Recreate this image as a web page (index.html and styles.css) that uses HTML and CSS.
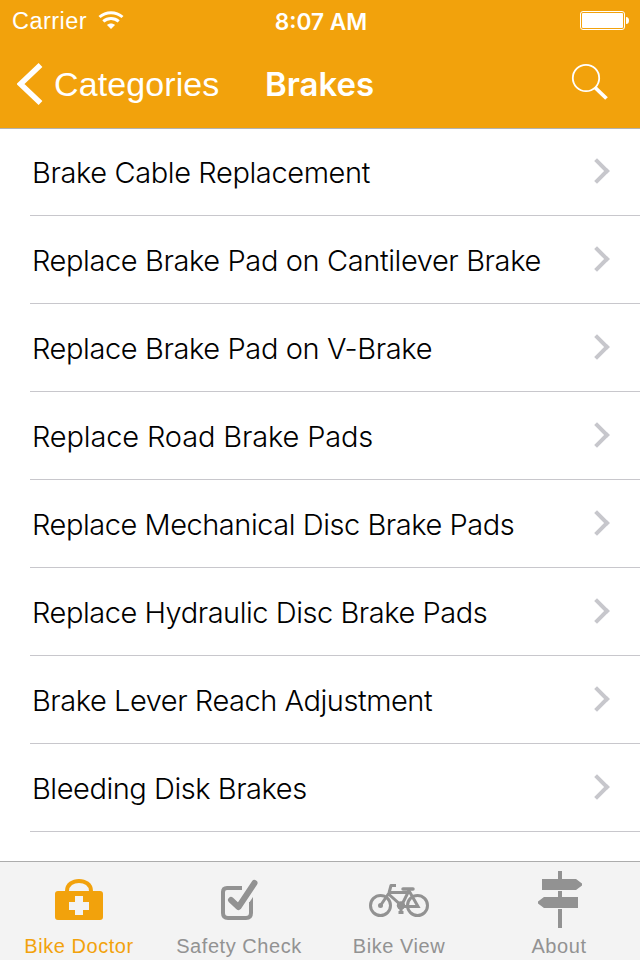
FILE: index.html
```html
<!DOCTYPE html>
<html lang="en">

<head>
    <meta charset="UTF-8">
    <meta name="viewport" content="width=device-width, initial-scale=1.0">
    <title>Brakes</title>
    <link rel="stylesheet" href="styles.css">
</head>

<body>
    <header>
        <div class="status-bar">
            <div class="carrier">
                <span>Carrier</span>
                <svg width="26" height="20" viewBox="0 0 26 20" fill="none" stroke="#fff" stroke-width="3">
                    <path d="M1.500 7C8 1.200 18 1.200 24.500 7"/>
                    <path d="M5.300 11.300c4.500-3.900 10.900-3.900 15.400 0"/>
                    <path d="M9 14.900c2.300-2 5.700-2 8 0L13 19z" fill="#fff" stroke="none"/>
                </svg>
            </div>
            <span class="time">8:07 AM</span>
            <svg class="battery" width="50" height="20" viewBox="0 0 50 20">
                <rect x=".5" y=".5" width="44" height="18" rx="2.500" fill="none" stroke="#fff"/>
                <rect x="2" y="2" width="41" height="15" rx="1" fill="#fff"/>
                <path d="M46 6q3 0 3 3.500t-3 3.500z" fill="#fff"/>
            </svg>
        </div>
        <nav class="nav-bar">
            <a class="back">
                <svg width="26" height="42" viewBox="0 0 26 42">
                    <path d="M23.500 2L3.500 21l20 19" fill="none" stroke="#fff" stroke-width="5.500"/>
                </svg>
                <span>Categories</span>
            </a>
            <h1>Brakes</h1>
            <svg class="search" width="38" height="38" viewBox="0 0 38 38" fill="none" stroke="#fff">
                <circle cx="15" cy="15" r="13.200" stroke-width="1.800"/>
                <path d="M24 24.500l11.500 11" stroke-width="3.800"/>
            </svg>
        </nav>
    </header>

    <ul class="list">
        <li><span>Brake Cable Replacement</span></li>
        <li><span>Replace Brake Pad on Cantilever Brake</span></li>
        <li><span>Replace Brake Pad on V-Brake</span></li>
        <li><span class="loose">Replace Road Brake Pads</span></li>
        <li><span class="tight">Replace Mechanical Disc Brake Pads</span></li>
        <li><span class="tight">Replace Hydraulic Disc Brake Pads</span></li>
        <li><span class="tight">Brake Lever Reach Adjustment</span></li>
        <li><span class="tight">Bleeding Disk Brakes</span></li>
    </ul>

    <footer class="tab-bar">
        <a class="tab active">
            <svg width="64" height="66" viewBox="0 0 64 66">
                <path d="M20 31v-2c0-13.500 24-13.500 24 0v2" fill="none" stroke="currentColor" stroke-width="4"/>
                <path fill-rule="evenodd" fill="currentColor" d="M11 29h42q3 0 3 3v23q0 3-3 3H11q-3 0-3-3V32q0-3 3-3zM28 34v6h-6v8h6v5h8v-5h6v-8h-6v-6z"/>
            </svg>
            <span>Bike Doctor</span>
        </a>
        <a class="tab">
            <svg width="64" height="66" viewBox="0 0 64 66" fill="none" stroke="currentColor">
                <path d="M35 26H20q-4 0-4 4v21q0 5 5 5h18q5 0 5-5V40" stroke-width="4"/>
                <path d="M46 35v7h-4v-1z" fill="currentColor" stroke="none"/>
                <path d="M24 38l7.500 7 16-24" stroke-width="6" stroke-linecap="round" stroke-linejoin="round"/>
            </svg>
            <span>Safety Check</span>
        </a>
        <a class="tab">
            <svg width="64" height="66" viewBox="0 0 64 66" fill="none" stroke="currentColor" stroke-width="3">
                <circle cx="13.500" cy="43.500" r="10"/>
                <circle cx="50.500" cy="43.500" r="10"/>
                <circle cx="13.500" cy="43.500" r="2.500" fill="currentColor" stroke="none"/>
                <circle cx="34" cy="43.500" r="4.200" fill="currentColor" stroke="none"/>
                <path d="M13.500 43.500L22 31l2-7.500h5" stroke-linejoin="round"/>
                <path d="M22 30.500h19L34.500 43.500 21.500 32M34 44.500h17L41 27"/>
                <path d="M36 27h10" stroke-width="3.500" stroke-linecap="round"/>
                <path d="M34 44v7M31.500 50.500h5"/>
            </svg>
            <span>Bike View</span>
        </a>
        <a class="tab">
            <svg width="64" height="66" viewBox="0 0 64 66" fill="currentColor">
                <path d="M31 9h4v8h14l6 4.500v2L49 28H15V17h16zM31 29h4v6h16v11H17l-6-4.500v-2L17 35h14zM31 47h4v19h-4z"/>
            </svg>
            <span>About</span>
        </a>
    </footer>
</body>

</html>
```

FILE: styles.css
```css
* {
    box-sizing: border-box;
}

body {
    margin: 0;
    height: 960px;
    display: flex;
    flex-direction: column;
    overflow: hidden;
    background: #fff;
    color: #000;
    font-family: "Liberation Sans", Arial, sans-serif;
}

svg {
    display: block;
    flex: none;
}

header {
    height: 129px;
    background: #f2a20c;
    color: #fff;
    border-bottom: 1px solid #b2b2b2;
}

.status-bar {
    height: 40px;
    display: grid;
    grid-template-columns: 1fr auto 1fr;
    align-items: center;
    padding: 2px 10px 0 12px;
}

.carrier {
    display: flex;
    align-items: center;
    gap: 11px;
    font-size: 23.5px;
    letter-spacing: 0.45px;
}

.carrier svg {
    margin-top: -2px;
}

.time {
    font-family: Inter, sans-serif;
    font-size: 22.7px;
    font-weight: 600;
}

.battery {
    justify-self: end;
}

.nav-bar {
    height: 88px;
    display: grid;
    grid-template-columns: 248px 1fr auto;
    align-items: center;
    padding: 0 31px 0 17px;
}

.back {
    display: flex;
    align-items: center;
    gap: 11px;
    font-size: 34px;
    letter-spacing: 0.1px;
}

h1 {
    margin: 0;
    font-family: Inter, sans-serif;
    font-size: 33px;
    font-weight: 600;
}

.search {
    margin-top: -4px;
}

.list {
    flex: 1;
    margin: 0;
    padding: 0 0 0 30px;
    list-style: none;
}

.list li {
    height: 88px;
    display: flex;
    align-items: center;
    justify-content: space-between;
    padding: 0 34px 0 2px;
    border-bottom: 1px solid #c8c7cc;
    font-family: Inter, sans-serif;
    font-size: 29px;
    font-weight: 300;
    letter-spacing: -0.39px;
    white-space: nowrap;
}

.list li:first-child {
    height: 87px;
}

.list span {
    padding-top: 1px;
}

.list .loose {
    letter-spacing: -0.15px;
}

.list .tight {
    letter-spacing: -0.46px;
}

.list li::after {
    content: "";
    box-sizing: border-box;
    width: 18px;
    height: 18px;
    margin-bottom: 2px;
    border: solid #c7c7cc;
    border-width: 4px 4px 0 0;
    transform: rotate(45deg);
}

.tab-bar {
    height: 99px;
    display: grid;
    grid-template-columns: repeat(4, 160px);
    background: #f3f3f3;
    border-top: 1px solid #acacac;
}

.tab {
    display: flex;
    flex-direction: column;
    align-items: center;
    padding-right: 2px;
    color: #929292;
    font-size: 20px;
    letter-spacing: 0.55px;
}

.tab span {
    margin-top: 7px;
}

.tab.active {
    color: #f2a20c;
}
```
